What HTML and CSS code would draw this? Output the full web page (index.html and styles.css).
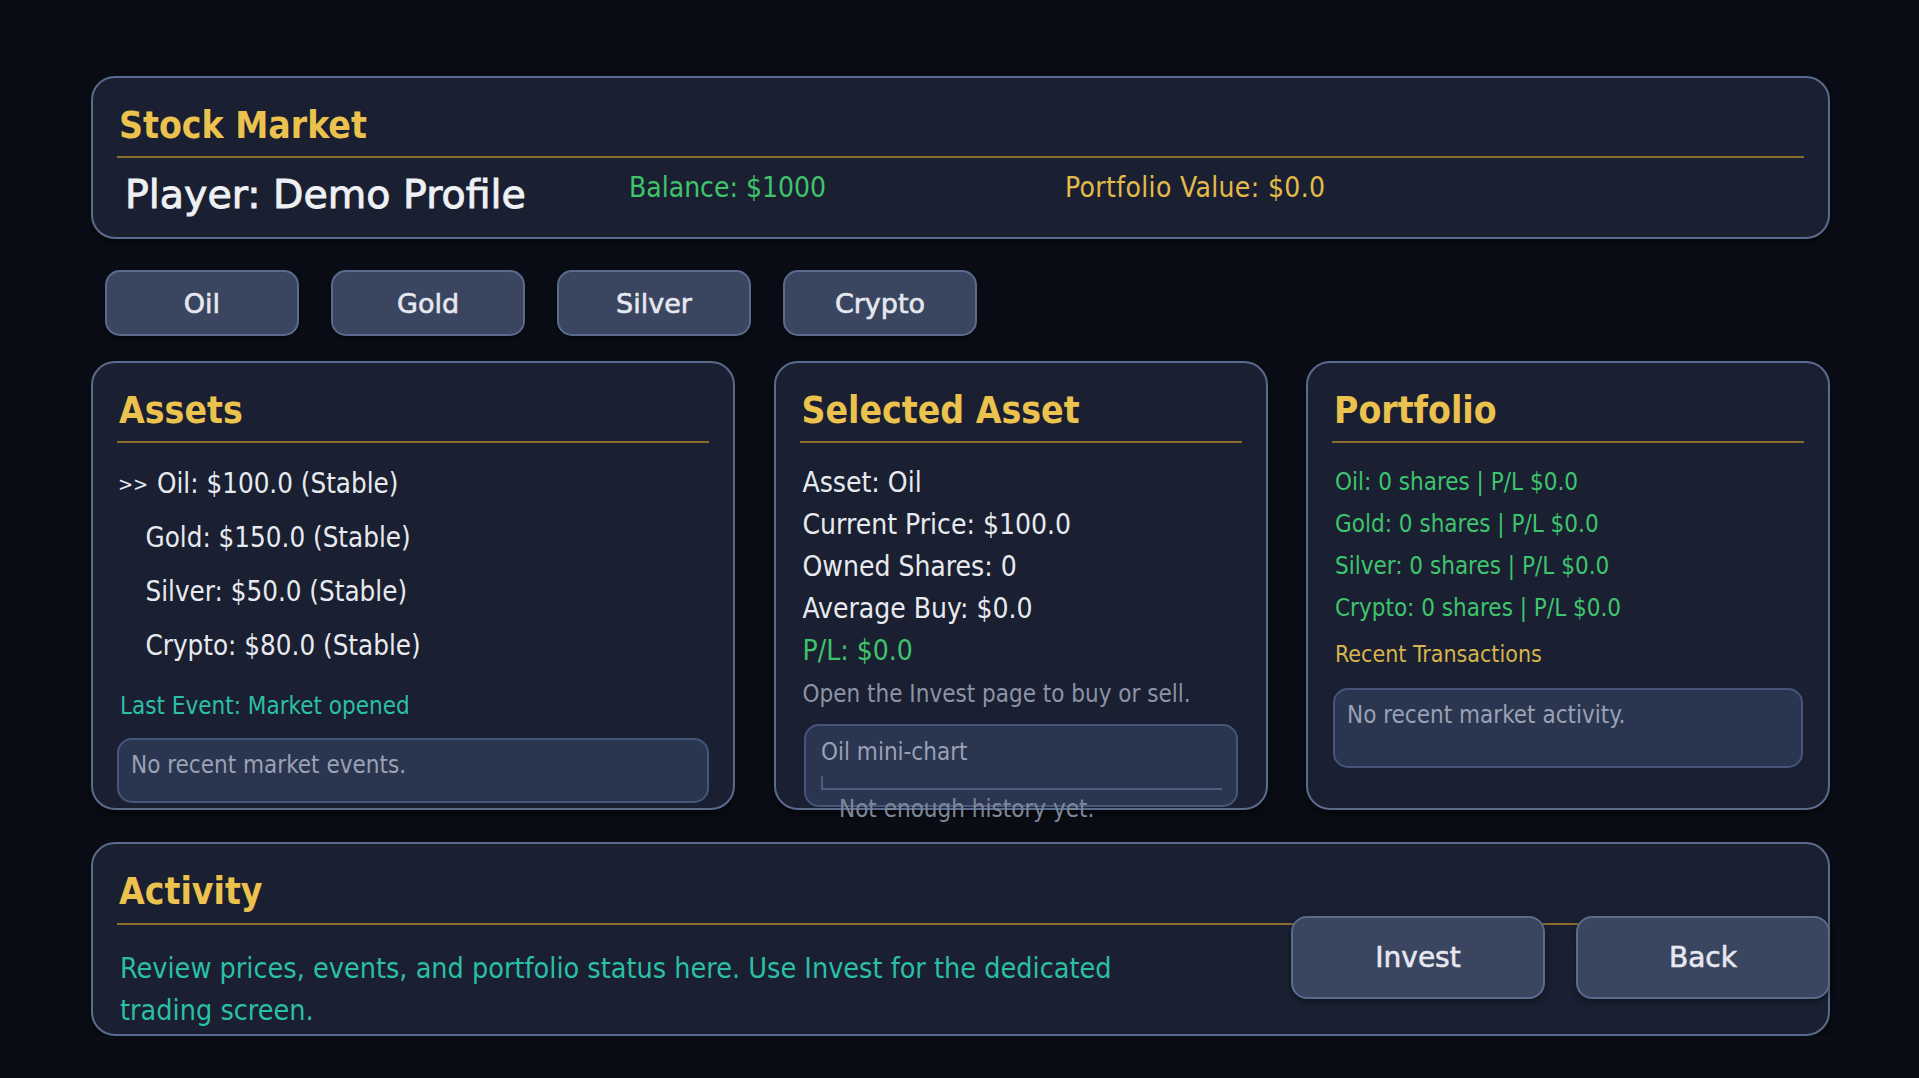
FILE: index.html
```html
<!DOCTYPE html>
<html lang="en">

<head>
  <meta charset="UTF-8">
  <meta name="viewport" content="width=device-width, initial-scale=1.0">
  <title>Stock Market</title>
  <link rel="stylesheet" href="styles.css">
</head>

<body>
  <main class="market">

    <header class="panel top">
      <h1 class="panel-title">Stock Market</h1>
      <div class="rule"></div>
      <div class="stats">
        <span class="player">Player: Demo Profile</span>
        <span class="balance">Balance: $1000</span>
        <span class="worth">Portfolio Value: $0.0</span>
      </div>
    </header>

    <nav class="tabs">
      <button class="tab">Oil</button>
      <button class="tab">Gold</button>
      <button class="tab">Silver</button>
      <button class="tab">Crypto</button>
    </nav>

    <section class="columns">
      <div class="panel assets">
        <h2 class="panel-title">Assets</h2>
        <div class="rule"></div>
        <ul class="asset-list">
          <li class="current"><span class="mark">&gt;&gt;</span>Oil: $100.0 (Stable)</li>
          <li>Gold: $150.0 (Stable)</li>
          <li>Silver: $50.0 (Stable)</li>
          <li>Crypto: $80.0 (Stable)</li>
        </ul>
        <p class="event">Last Event: Market opened</p>
        <div class="well events">No recent market events.</div>
      </div>

      <div class="panel selected">
        <h2 class="panel-title">Selected Asset</h2>
        <div class="rule"></div>
        <ul class="details">
          <li>Asset: Oil</li>
          <li>Current Price: $100.0</li>
          <li>Owned Shares: 0</li>
          <li>Average Buy: $0.0</li>
          <li class="gain">P/L: $0.0</li>
        </ul>
        <p class="hint">Open the Invest page to buy or sell.</p>
        <div class="well chart">
          <p>Oil mini-chart</p>
          <div class="axis"></div>
          <p class="empty">Not enough history yet.</p>
        </div>
      </div>

      <div class="panel portfolio">
        <h2 class="panel-title">Portfolio</h2>
        <div class="rule"></div>
        <ul class="holdings">
          <li>Oil: 0 shares | P/L $0.0</li>
          <li>Gold: 0 shares | P/L $0.0</li>
          <li>Silver: 0 shares | P/L $0.0</li>
          <li>Crypto: 0 shares | P/L $0.0</li>
        </ul>
        <h3 class="sub-title">Recent Transactions</h3>
        <div class="well trades">No recent market activity.</div>
      </div>
    </section>

    <section class="panel activity">
      <h2 class="panel-title">Activity</h2>
      <div class="rule"></div>
      <p class="note">Review prices, events, and portfolio status here. Use Invest for the dedicated trading screen.</p>
      <div class="actions">
        <button class="btn">Invest</button>
        <button class="btn">Back</button>
      </div>
    </section>

  </main>
</body>

</html>
```

FILE: styles.css
```css
* {
  margin: 0;
  padding: 0;
  box-sizing: border-box;
  list-style: none;
}

body {
  background: #0a0d15;
  font-family: "DejaVu Sans Condensed", "DejaVu Sans", sans-serif;
  font-stretch: condensed;
  color: #e8eaf0;
}

.market {
  width: 1739px;
  margin: 76px 0 0 91px;
}

/* 面板共用外框 */
.panel {
  background: #1a2031;
  border: 2px solid #5a6b8e;
  border-radius: 24px;
  padding: 26px 24px 0;
  box-shadow: 0 5px 10px rgba(0, 0, 0, 0.45);
}

.panel-title {
  font-size: 37px;
  font-weight: bold;
  line-height: 44px;
  color: #ecc24e;
  padding-left: 2px;
}

.rule {
  height: 2px;
  margin-top: 8px;
  background: #8a6d2c;
}

/* 上方資訊列 */
.top {
  height: 163px;
}

.stats {
  display: grid;
  grid-template-columns: 504px 436px auto;
  align-items: start;
  margin-top: 14px;
  padding-left: 8px;
}

/* 較大的字改用一般寬度的字型 */
.player,
.tab,
.btn {
  font-family: "DejaVu Sans", sans-serif;
  font-stretch: normal;
  font-weight: normal;
  -webkit-text-stroke: 0.6px currentColor;
}

.player {
  font-size: 39.5px;
  line-height: 45px;
  color: #eef0f4;
  -webkit-text-stroke: 0.9px currentColor;
}

.balance,
.worth {
  font-size: 28px;
  line-height: 32.6px;
}

.balance {
  color: #3fc46b;
}

.worth {
  color: #e4bb4a;
  letter-spacing: 0.35px;
}

/* 資產切換按鈕 */
.tabs {
  display: flex;
  gap: 32px;
  margin-top: 31px;
  padding-left: 14px;
}

.tab,
.btn {
  color: #e6e8ef;
  background: #3a4560;
  border: 2px solid #5a6b8e;
  box-shadow: 0 3px 6px rgba(0, 0, 0, 0.4);
}

.tab {
  width: 194px;
  height: 66px;
  border-radius: 15px;
  font-size: 27px;
}

/* 三欄 */
.columns {
  display: grid;
  grid-template-columns: 644px 494px 1fr;
  column-gap: 38.5px;
  margin-top: 25px;
}

.columns .panel {
  height: 449px;
}

.asset-list {
  margin-top: 12.5px;
}

.asset-list li {
  font-size: 27.5px;
  line-height: 54px;
  padding-left: 28.5px;
  white-space: nowrap;
}

.asset-list .current {
  padding-left: 1px;
}

.mark {
  display: inline-block;
  width: 39px;
  font-size: 20px;
  line-height: 20px;
  vertical-align: 2px;
}

.event {
  margin-top: 20px;
  padding-left: 3px;
  font-size: 24px;
  line-height: 28px;
  color: #2bbfa6;
}

.well {
  background: #2a3550;
  border: 2px solid #46567a;
  border-radius: 15px;
  font-size: 24px;
  line-height: 28px;
  color: #99a1b3;
}

.events {
  height: 65px;
  margin-top: 18px;
  padding: 11px 12px;
}

.details {
  margin-top: 19.3px;
  padding-left: 3px;
}

.details li {
  font-size: 28px;
  line-height: 42px;
}

.details .gain {
  color: #3fc46b;
}

.hint {
  margin-top: 7.4px;
  padding-left: 3px;
  font-size: 24px;
  line-height: 28px;
  color: #8b93a6;
}

.chart {
  height: 83px;
  margin: 16.3px 4px 0;
  padding: 11.7px 15.5px 0;
}

.axis {
  width: 401px;
  height: 14px;
  margin-top: 10.3px;
  border-left: 2px solid #4d5e82;
  border-bottom: 2px solid #4d5e82;
}

.chart .empty {
  margin: 4.7px 0 0 18px;
  color: #7d879b;
}

.holdings {
  margin-top: 17.7px;
  padding-left: 3px;
}

.holdings li {
  font-size: 24px;
  line-height: 42px;
  color: #3ec46d;
}

.sub-title {
  margin-top: 12.8px;
  padding-left: 3px;
  font-size: 23px;
  font-weight: normal;
  line-height: 27px;
  color: #d8b44c;
}

.trades {
  height: 80px;
  margin: 19.5px 1px 0;
  padding: 10.7px 12px;
}

/* 下方活動區：按鈕壓在分隔線上 */
.activity {
  display: grid;
  grid-template-columns: 1fr auto;
  grid-template-rows: auto auto auto;
  height: 194px;
  margin-top: 32px;
}

.activity .panel-title {
  grid-column: 1 / -1;
  grid-row: 1;
}

.activity .rule {
  grid-column: 1 / -1;
  grid-row: 2;
  margin-top: 7px;
}

.note {
  grid-column: 1;
  grid-row: 3;
  max-width: 1045px;
  margin-top: 20px;
  padding-left: 3px;
  font-size: 28.5px;
  line-height: 42px;
  color: #2bbfa6;
}

.actions {
  grid-column: 2;
  grid-row: 2 / 4;
  align-self: start;
  display: flex;
  gap: 31px;
  margin: 0 -26px 0 0;
}

.btn {
  width: 254px;
  height: 83px;
  border-radius: 16px;
  font-size: 28px;
}
```
